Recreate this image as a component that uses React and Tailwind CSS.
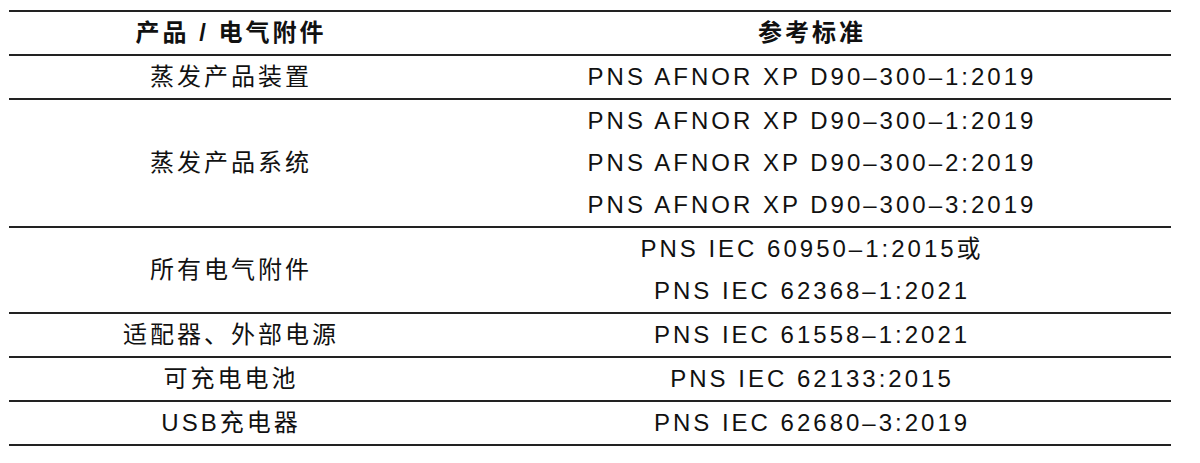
const rows = [
  { name: "蒸发产品装置", standards: ["PNS AFNOR XP D90–300–1:2019"] },
  {
    name: "蒸发产品系统",
    standards: [
      "PNS AFNOR XP D90–300–1:2019",
      "PNS AFNOR XP D90–300–2:2019",
      "PNS AFNOR XP D90–300–3:2019",
    ],
  },
  { name: "所有电气附件", standards: ["PNS IEC 60950–1:2015或", "PNS IEC 62368–1:2021"] },
  { name: "适配器、外部电源", standards: ["PNS IEC 61558–1:2021"] },
  { name: "可充电电池", standards: ["PNS IEC 62133:2015"] },
  { name: "USB充电器", standards: ["PNS IEC 62680–3:2019"] },
];

const App = () => {
  return (
    <div
      className="w-[1200px] h-[463px] bg-white pt-[10px] text-[24px] tracking-[3px] text-[#111]"
      style={{ fontFamily: '"Liberation Sans", "Noto Sans CJK SC", sans-serif' }}
    >
      <div className="ml-[9px] w-[1162px] border-t-2 border-[#222]">
        {/* Header */}
        <div className="grid grid-cols-[444px_1fr] border-b-2 border-[#222] font-bold">
          <div className="h-[42px] flex items-center justify-center">产品 / 电气附件</div>
          <div className="h-[42px] flex items-center justify-center">参考标准</div>
        </div>

        {/* Body */}
        {rows.map((row) => (
          <div key={row.name} className="grid grid-cols-[444px_1fr] border-b-2 border-[#222]">
            <div className="flex items-center justify-center">{row.name}</div>
            <div className="flex flex-col">
              {row.standards.map((s) => (
                <div key={s} className="h-[42px] flex items-center justify-center">
                  {s}
                </div>
              ))}
            </div>
          </div>
        ))}
      </div>
    </div>
  );
};

export default App;
